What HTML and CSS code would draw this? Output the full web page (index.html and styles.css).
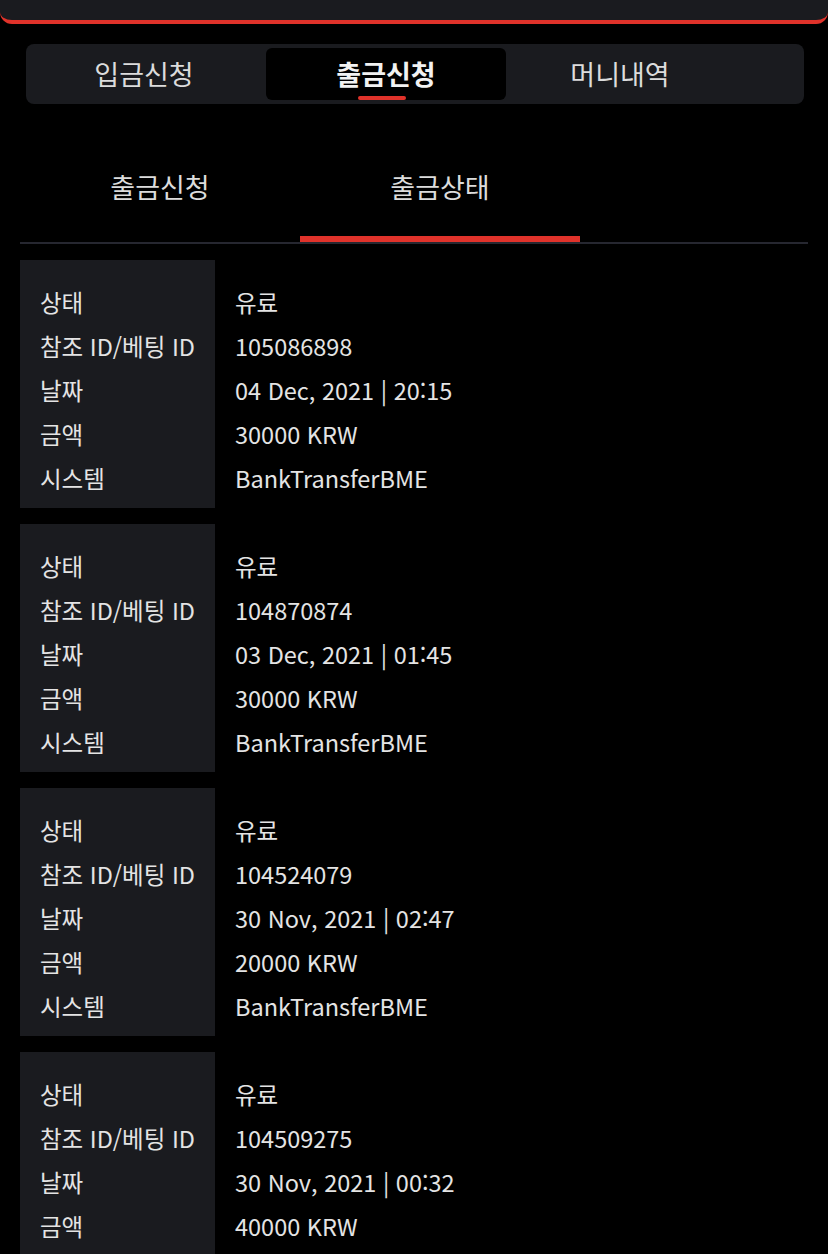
FILE: index.html
```html
<!DOCTYPE html>
<html lang="ko">
<head>
    <meta charset="UTF-8">
    <title>출금상태</title>
    <link rel="stylesheet" href="styles.css">
</head>
<body>
    <header class="topbar"></header>

    <nav class="main-tabs">
        <button class="main-tab">입금신청</button>
        <button class="main-tab active">출금신청</button>
        <button class="main-tab last">머니내역</button>
    </nav>

    <div class="sub-tabs">
        <div class="sub-tab">출금신청</div>
        <div class="sub-tab active">출금상태</div>
    </div>

    <div class="records">
        <div class="record">
            <div class="record-labels">
                <div>상태</div>
                <div>참조 ID/베팅 ID</div>
                <div>날짜</div>
                <div>금액</div>
                <div>시스템</div>
            </div>
            <div class="record-values">
                <div>유료</div>
                <div>105086898</div>
                <div>04 Dec, 2021 | 20:15</div>
                <div>30000 KRW</div>
                <div>BankTransferBME</div>
            </div>
        </div>
        <div class="record">
            <div class="record-labels">
                <div>상태</div>
                <div>참조 ID/베팅 ID</div>
                <div>날짜</div>
                <div>금액</div>
                <div>시스템</div>
            </div>
            <div class="record-values">
                <div>유료</div>
                <div>104870874</div>
                <div>03 Dec, 2021 | 01:45</div>
                <div>30000 KRW</div>
                <div>BankTransferBME</div>
            </div>
        </div>
        <div class="record">
            <div class="record-labels">
                <div>상태</div>
                <div>참조 ID/베팅 ID</div>
                <div>날짜</div>
                <div>금액</div>
                <div>시스템</div>
            </div>
            <div class="record-values">
                <div>유료</div>
                <div>104524079</div>
                <div>30 Nov, 2021 | 02:47</div>
                <div>20000 KRW</div>
                <div>BankTransferBME</div>
            </div>
        </div>
        <div class="record">
            <div class="record-labels">
                <div>상태</div>
                <div>참조 ID/베팅 ID</div>
                <div>날짜</div>
                <div>금액</div>
                <div>시스템</div>
            </div>
            <div class="record-values">
                <div>유료</div>
                <div>104509275</div>
                <div>30 Nov, 2021 | 00:32</div>
                <div>40000 KRW</div>
                <div>BankTransferBME</div>
            </div>
        </div>
    </div>
</body>
</html>
```

FILE: styles.css
```css
body { margin: 0; background: #000; color: #e4e4e4; font-family: "Noto Sans CJK KR", "Noto Sans", sans-serif; }

.topbar { height: 20px; background: #1a1b1f; border-bottom: 4px solid #e0322a; border-radius: 0 0 12px 12px; }

.main-tabs { display: flex; margin: 20px 24px 0 26px; padding: 4px 0; background: #1a1b1f; border-radius: 8px; }
.main-tab { position: relative; width: 236px; height: 52px; padding: 0; border: 0; border-radius: 6px; background: none; color: #dcdcdc; font-family: inherit; font-size: 27px; line-height: 52px; }
.main-tab.active { width: 240px; margin-left: 4px; background: #000; color: #f2f2f2; font-weight: 700; }
.main-tab.last { width: 228px; }
.main-tab.active::after { content: ""; position: absolute; left: 92px; bottom: 0; width: 48px; height: 4px; border-radius: 2px; background: #e0322a; }

.sub-tabs { display: flex; margin: 20px 20px 0; border-bottom: 2px solid #262730; }
.sub-tab { width: 280px; padding: 45px 0 31px; line-height: 36px; font-size: 27px; text-align: center; color: #dcdcdc; border-bottom: 6px solid transparent; }
.sub-tab.active { border-bottom-color: #e0322a; }

.records { display: flex; flex-direction: column; gap: 16px; margin: 16px 20px 0; }
.record { display: flex; font-size: 23.5px; line-height: 44px; }
.record-labels { width: 155px; padding: 20px 20px 8px; background: #1a1b1f; white-space: nowrap; }
.record-values { padding: 20px 20px 8px; }
```
